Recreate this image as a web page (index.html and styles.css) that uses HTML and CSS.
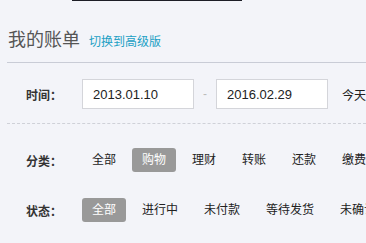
FILE: index.html
```html
<!DOCTYPE html>
<html lang="zh-CN">
<head>
    <meta charset="UTF-8">
    <title>我的账单</title>
    <link rel="stylesheet" href="styles.css">
</head>
<body>
    <div class="top-bar"></div>

    <div class="bill-header">
        <h1 class="bill-title">我的账单</h1>
        <a class="switch-link" href="#">切换到高级版</a>
    </div>

    <div class="filter-row time-row">
        <span class="filter-label">时间：</span>
        <input class="date-input" type="text" value="2013.01.10">
        <span class="date-dash">-</span>
        <input class="date-input" type="text" value="2016.02.29">
        <span class="quick-date">今天</span>
    </div>

    <div class="filter-options">
        <div class="filter-row">
            <span class="filter-label">分类：</span>
            <div class="option-list">
                <span class="option">全部</span>
                <span class="option active">购物</span>
                <span class="option">理财</span>
                <span class="option">转账</span>
                <span class="option">还款</span>
                <span class="option">缴费</span>
            </div>
        </div>
        <div class="filter-row">
            <span class="filter-label">状态：</span>
            <div class="option-list">
                <span class="option active">全部</span>
                <span class="option">进行中</span>
                <span class="option">未付款</span>
                <span class="option">等待发货</span>
                <span class="option">未确认收货</span>
            </div>
        </div>
    </div>
</body>
</html>
```

FILE: styles.css
```css
:root {
    --page-bg: #f3f4f9;
    --text-dark: #333;
    --line: #c9ccd6;
}

body {
    margin: 0;
    background: var(--page-bg);
    font-family: "Liberation Sans", "Noto Sans CJK SC", sans-serif;
    color: var(--text-dark);
    overflow: hidden;
    white-space: nowrap;
}

.top-bar {
    margin-left: 72px;
    width: 170px;
    height: 1px;
    background: #1d1d26;
}

.bill-header {
    display: flex;
    align-items: baseline;
    gap: 9px;
    margin: 27px 0 0 7px;
    padding: 0 0 10px 1px;
    border-bottom: 1px solid var(--line);
}

.bill-title {
    margin: 0;
    font-size: 18px;
    font-weight: normal;
    line-height: 24px;
    color: #555;
}

.switch-link {
    font-size: 12px;
    color: #219fc4;
    text-decoration: none;
}

.filter-row {
    display: flex;
    align-items: center;
    margin-left: 7px;
}

.time-row {
    padding: 16px 0 14px;
    border-bottom: 1px dashed #cfd1d8;
}

.filter-label {
    flex-shrink: 0;
    box-sizing: border-box;
    width: 75px;
    padding-left: 19px;
    font-size: 12px;
    font-weight: bold;
    color: var(--text-dark);
}

.date-input {
    flex-shrink: 0;
    box-sizing: border-box;
    width: 112px;
    height: 30px;
    margin: 0;
    padding: 0 0 0 10px;
    border: 1px solid #d4d5da;
    background: #fff;
    font-family: inherit;
    font-size: 13px;
    color: #222;
    outline: none;
}

.date-dash {
    flex-shrink: 0;
    width: 22px;
    text-align: center;
    font-size: 12px;
    color: #bbb;
}

.quick-date {
    flex-shrink: 0;
    margin-left: 14px;
    font-size: 12px;
    color: #222;
}

.filter-options {
    display: flex;
    flex-direction: column;
    gap: 26px;
    padding-top: 24px;
}

.option-list {
    display: flex;
    gap: 6px;
}

.option {
    flex-shrink: 0;
    height: 24px;
    padding: 0 10px;
    border-radius: 3px;
    font-size: 12px;
    line-height: 24px;
    color: #222;
}

.option.active {
    background: #999;
    color: #fff;
}
```
